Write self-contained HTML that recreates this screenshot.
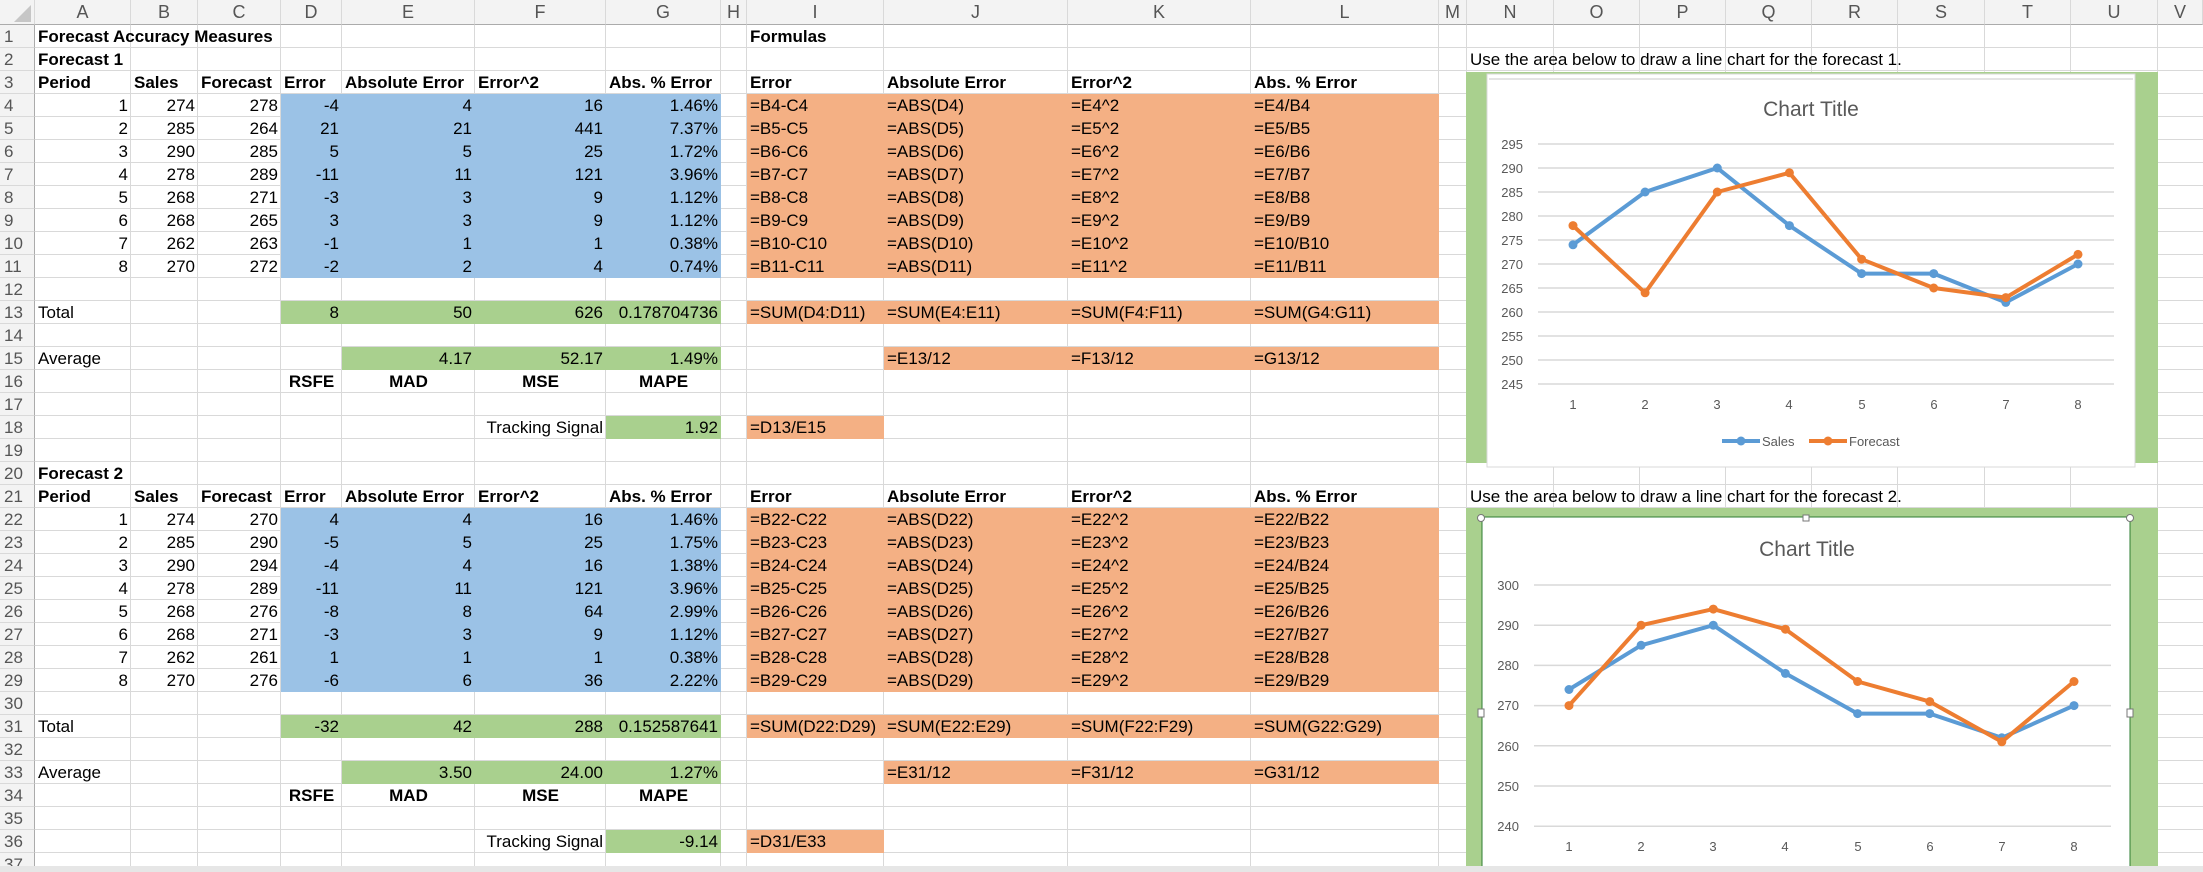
<!DOCTYPE html>
<html><head><meta charset="utf-8"><style>
*{margin:0;padding:0;box-sizing:border-box}
body{width:2203px;height:872px;overflow:hidden;background:#fff;font-family:"Liberation Sans",Arial,sans-serif}
#w{position:relative;width:2203px;height:872px;overflow:hidden}
#lines{position:absolute;left:0;top:25px;width:2203px;height:847px;background:repeating-linear-gradient(to bottom,transparent 0 22px,#d9d9d9 22px 23px)}
.vl{position:absolute;top:0;width:1px;height:872px;background:#d9d9d9}
#g{position:absolute;left:0;top:0;display:grid;grid-template-columns:35px 96px 67px 83px 61px 133px 131px 115px 26px 137px 184px 183px 188px 28px 87px 86px 86px 86px 86px 87px 86px 87px 45px;grid-template-rows:25px repeat(37,23px);font-size:17px;color:#000}
#g div{white-space:nowrap;line-height:23px;padding:0 3px;overflow:visible}
.b{background:#9bc2e6}.o{background:#f4b084}.gr{background:#a9d08e}
.r{text-align:right}.c{text-align:center}.bd{font-weight:bold}
.ch{background:#f3f3f3;color:#555;text-align:center;font-size:18px;line-height:25px!important;border-right:1px solid #d9d9d9;border-bottom:1px solid #ababab;padding:0!important}
.rh{background:#f3f3f3;color:#555;font-size:17px;border-right:1px solid #ababab;border-bottom:1px solid #d9d9d9;padding:0 0 0 4px!important}
</style></head><body><div id="w">
<div id="lines"></div>
<div class="vl" style="left:130px"></div><div class="vl" style="left:197px"></div><div class="vl" style="left:280px"></div><div class="vl" style="left:341px"></div><div class="vl" style="left:474px"></div><div class="vl" style="left:605px"></div><div class="vl" style="left:720px"></div><div class="vl" style="left:746px"></div><div class="vl" style="left:883px"></div><div class="vl" style="left:1067px"></div><div class="vl" style="left:1250px"></div><div class="vl" style="left:1438px"></div><div class="vl" style="left:1466px"></div><div class="vl" style="left:1553px"></div><div class="vl" style="left:1639px"></div><div class="vl" style="left:1725px"></div><div class="vl" style="left:1811px"></div><div class="vl" style="left:1897px"></div><div class="vl" style="left:1984px"></div><div class="vl" style="left:2070px"></div><div class="vl" style="left:2157px"></div>
<div id="g">
<div class="ch" style="grid-area:1/1;position:relative"><svg width="34" height="24" style="position:absolute;left:0;top:0"><polygon points="31,5 31,22 14,22" fill="#c6c6c6"/></svg></div>
<div class="ch" style="grid-area:1/2">A</div><div class="ch" style="grid-area:1/3">B</div><div class="ch" style="grid-area:1/4">C</div><div class="ch" style="grid-area:1/5">D</div><div class="ch" style="grid-area:1/6">E</div><div class="ch" style="grid-area:1/7">F</div><div class="ch" style="grid-area:1/8">G</div><div class="ch" style="grid-area:1/9">H</div><div class="ch" style="grid-area:1/10">I</div><div class="ch" style="grid-area:1/11">J</div><div class="ch" style="grid-area:1/12">K</div><div class="ch" style="grid-area:1/13">L</div><div class="ch" style="grid-area:1/14">M</div><div class="ch" style="grid-area:1/15">N</div><div class="ch" style="grid-area:1/16">O</div><div class="ch" style="grid-area:1/17">P</div><div class="ch" style="grid-area:1/18">Q</div><div class="ch" style="grid-area:1/19">R</div><div class="ch" style="grid-area:1/20">S</div><div class="ch" style="grid-area:1/21">T</div><div class="ch" style="grid-area:1/22">U</div><div class="ch" style="grid-area:1/23">V</div>
<div class="rh" style="grid-area:2/1">1</div><div class="rh" style="grid-area:3/1">2</div><div class="rh" style="grid-area:4/1">3</div><div class="rh" style="grid-area:5/1">4</div><div class="rh" style="grid-area:6/1">5</div><div class="rh" style="grid-area:7/1">6</div><div class="rh" style="grid-area:8/1">7</div><div class="rh" style="grid-area:9/1">8</div><div class="rh" style="grid-area:10/1">9</div><div class="rh" style="grid-area:11/1">10</div><div class="rh" style="grid-area:12/1">11</div><div class="rh" style="grid-area:13/1">12</div><div class="rh" style="grid-area:14/1">13</div><div class="rh" style="grid-area:15/1">14</div><div class="rh" style="grid-area:16/1">15</div><div class="rh" style="grid-area:17/1">16</div><div class="rh" style="grid-area:18/1">17</div><div class="rh" style="grid-area:19/1">18</div><div class="rh" style="grid-area:20/1">19</div><div class="rh" style="grid-area:21/1">20</div><div class="rh" style="grid-area:22/1">21</div><div class="rh" style="grid-area:23/1">22</div><div class="rh" style="grid-area:24/1">23</div><div class="rh" style="grid-area:25/1">24</div><div class="rh" style="grid-area:26/1">25</div><div class="rh" style="grid-area:27/1">26</div><div class="rh" style="grid-area:28/1">27</div><div class="rh" style="grid-area:29/1">28</div><div class="rh" style="grid-area:30/1">29</div><div class="rh" style="grid-area:31/1">30</div><div class="rh" style="grid-area:32/1">31</div><div class="rh" style="grid-area:33/1">32</div><div class="rh" style="grid-area:34/1">33</div><div class="rh" style="grid-area:35/1">34</div><div class="rh" style="grid-area:36/1">35</div><div class="rh" style="grid-area:37/1">36</div><div class="rh" style="grid-area:38/1">37</div>

<div class="b" style="grid-area:5/5/13/9"></div><div class="o" style="grid-area:5/10/13/14"></div>
<div class="gr" style="grid-area:14/5/15/9"></div><div class="o" style="grid-area:14/10/15/14"></div>
<div class="gr" style="grid-area:16/6/17/9"></div><div class="o" style="grid-area:16/11/17/14"></div>
<div class="gr" style="grid-area:19/8/20/9"></div><div class="o" style="grid-area:19/10/20/11"></div>
<div class="b" style="grid-area:23/5/31/9"></div><div class="o" style="grid-area:23/10/31/14"></div>
<div class="gr" style="grid-area:32/5/33/9"></div><div class="o" style="grid-area:32/10/33/14"></div>
<div class="gr" style="grid-area:34/6/35/9"></div><div class="o" style="grid-area:34/11/35/14"></div>
<div class="gr" style="grid-area:37/8/38/9"></div><div class="o" style="grid-area:37/10/38/11"></div>

<div class="bd" style="grid-area:2/2/3/6">Forecast Accuracy Measures</div>
<div class="bd" style="grid-area:2/10">Formulas</div>
<div class="bd" style="grid-area:3/2">Forecast 1</div>
<div style="grid-area:3/15/4/22">Use the area below to draw a line chart for the forecast 1.</div>
<div class="bd" style="grid-area:4/2">Period</div><div class="bd" style="grid-area:4/3">Sales</div><div class="bd" style="grid-area:4/4">Forecast</div><div class="bd" style="grid-area:4/5">Error</div><div class="bd" style="grid-area:4/6">Absolute Error</div><div class="bd" style="grid-area:4/7">Error^2</div><div class="bd" style="grid-area:4/8">Abs. % Error</div>
<div class="bd" style="grid-area:4/10">Error</div><div class="bd" style="grid-area:4/11">Absolute Error</div><div class="bd" style="grid-area:4/12">Error^2</div><div class="bd" style="grid-area:4/13">Abs. % Error</div>

<div class="r" style="grid-area:5/2">1</div><div class="r" style="grid-area:5/3">274</div><div class="r" style="grid-area:5/4">278</div><div class="r" style="grid-area:5/5">-4</div><div class="r" style="grid-area:5/6">4</div><div class="r" style="grid-area:5/7">16</div><div class="r" style="grid-area:5/8">1.46%</div><div style="grid-area:5/10">=B4-C4</div><div style="grid-area:5/11">=ABS(D4)</div><div style="grid-area:5/12">=E4^2</div><div style="grid-area:5/13">=E4/B4</div>
<div class="r" style="grid-area:6/2">2</div><div class="r" style="grid-area:6/3">285</div><div class="r" style="grid-area:6/4">264</div><div class="r" style="grid-area:6/5">21</div><div class="r" style="grid-area:6/6">21</div><div class="r" style="grid-area:6/7">441</div><div class="r" style="grid-area:6/8">7.37%</div><div style="grid-area:6/10">=B5-C5</div><div style="grid-area:6/11">=ABS(D5)</div><div style="grid-area:6/12">=E5^2</div><div style="grid-area:6/13">=E5/B5</div>
<div class="r" style="grid-area:7/2">3</div><div class="r" style="grid-area:7/3">290</div><div class="r" style="grid-area:7/4">285</div><div class="r" style="grid-area:7/5">5</div><div class="r" style="grid-area:7/6">5</div><div class="r" style="grid-area:7/7">25</div><div class="r" style="grid-area:7/8">1.72%</div><div style="grid-area:7/10">=B6-C6</div><div style="grid-area:7/11">=ABS(D6)</div><div style="grid-area:7/12">=E6^2</div><div style="grid-area:7/13">=E6/B6</div>
<div class="r" style="grid-area:8/2">4</div><div class="r" style="grid-area:8/3">278</div><div class="r" style="grid-area:8/4">289</div><div class="r" style="grid-area:8/5">-11</div><div class="r" style="grid-area:8/6">11</div><div class="r" style="grid-area:8/7">121</div><div class="r" style="grid-area:8/8">3.96%</div><div style="grid-area:8/10">=B7-C7</div><div style="grid-area:8/11">=ABS(D7)</div><div style="grid-area:8/12">=E7^2</div><div style="grid-area:8/13">=E7/B7</div>
<div class="r" style="grid-area:9/2">5</div><div class="r" style="grid-area:9/3">268</div><div class="r" style="grid-area:9/4">271</div><div class="r" style="grid-area:9/5">-3</div><div class="r" style="grid-area:9/6">3</div><div class="r" style="grid-area:9/7">9</div><div class="r" style="grid-area:9/8">1.12%</div><div style="grid-area:9/10">=B8-C8</div><div style="grid-area:9/11">=ABS(D8)</div><div style="grid-area:9/12">=E8^2</div><div style="grid-area:9/13">=E8/B8</div>
<div class="r" style="grid-area:10/2">6</div><div class="r" style="grid-area:10/3">268</div><div class="r" style="grid-area:10/4">265</div><div class="r" style="grid-area:10/5">3</div><div class="r" style="grid-area:10/6">3</div><div class="r" style="grid-area:10/7">9</div><div class="r" style="grid-area:10/8">1.12%</div><div style="grid-area:10/10">=B9-C9</div><div style="grid-area:10/11">=ABS(D9)</div><div style="grid-area:10/12">=E9^2</div><div style="grid-area:10/13">=E9/B9</div>
<div class="r" style="grid-area:11/2">7</div><div class="r" style="grid-area:11/3">262</div><div class="r" style="grid-area:11/4">263</div><div class="r" style="grid-area:11/5">-1</div><div class="r" style="grid-area:11/6">1</div><div class="r" style="grid-area:11/7">1</div><div class="r" style="grid-area:11/8">0.38%</div><div style="grid-area:11/10">=B10-C10</div><div style="grid-area:11/11">=ABS(D10)</div><div style="grid-area:11/12">=E10^2</div><div style="grid-area:11/13">=E10/B10</div>
<div class="r" style="grid-area:12/2">8</div><div class="r" style="grid-area:12/3">270</div><div class="r" style="grid-area:12/4">272</div><div class="r" style="grid-area:12/5">-2</div><div class="r" style="grid-area:12/6">2</div><div class="r" style="grid-area:12/7">4</div><div class="r" style="grid-area:12/8">0.74%</div><div style="grid-area:12/10">=B11-C11</div><div style="grid-area:12/11">=ABS(D11)</div><div style="grid-area:12/12">=E11^2</div><div style="grid-area:12/13">=E11/B11</div>

<div style="grid-area:14/2">Total</div><div class="r" style="grid-area:14/5">8</div><div class="r" style="grid-area:14/6">50</div><div class="r" style="grid-area:14/7">626</div><div class="r" style="grid-area:14/8">0.178704736</div><div style="grid-area:14/10">=SUM(D4:D11)</div><div style="grid-area:14/11">=SUM(E4:E11)</div><div style="grid-area:14/12">=SUM(F4:F11)</div><div style="grid-area:14/13">=SUM(G4:G11)</div>
<div style="grid-area:16/2">Average</div><div class="r" style="grid-area:16/6">4.17</div><div class="r" style="grid-area:16/7">52.17</div><div class="r" style="grid-area:16/8">1.49%</div><div style="grid-area:16/11">=E13/12</div><div style="grid-area:16/12">=F13/12</div><div style="grid-area:16/13">=G13/12</div>
<div class="bd c" style="grid-area:17/5">RSFE</div><div class="bd c" style="grid-area:17/6">MAD</div><div class="bd c" style="grid-area:17/7">MSE</div><div class="bd c" style="grid-area:17/8">MAPE</div>
<div class="r" style="grid-area:19/7">Tracking Signal</div><div class="r" style="grid-area:19/8">1.92</div><div style="grid-area:19/10">=D13/E15</div>

<div class="bd" style="grid-area:21/2">Forecast 2</div>
<div style="grid-area:22/15/23/22">Use the area below to draw a line chart for the forecast 2.</div>
<div class="bd" style="grid-area:22/2">Period</div><div class="bd" style="grid-area:22/3">Sales</div><div class="bd" style="grid-area:22/4">Forecast</div><div class="bd" style="grid-area:22/5">Error</div><div class="bd" style="grid-area:22/6">Absolute Error</div><div class="bd" style="grid-area:22/7">Error^2</div><div class="bd" style="grid-area:22/8">Abs. % Error</div>
<div class="bd" style="grid-area:22/10">Error</div><div class="bd" style="grid-area:22/11">Absolute Error</div><div class="bd" style="grid-area:22/12">Error^2</div><div class="bd" style="grid-area:22/13">Abs. % Error</div>

<div class="r" style="grid-area:23/2">1</div><div class="r" style="grid-area:23/3">274</div><div class="r" style="grid-area:23/4">270</div><div class="r" style="grid-area:23/5">4</div><div class="r" style="grid-area:23/6">4</div><div class="r" style="grid-area:23/7">16</div><div class="r" style="grid-area:23/8">1.46%</div><div style="grid-area:23/10">=B22-C22</div><div style="grid-area:23/11">=ABS(D22)</div><div style="grid-area:23/12">=E22^2</div><div style="grid-area:23/13">=E22/B22</div>
<div class="r" style="grid-area:24/2">2</div><div class="r" style="grid-area:24/3">285</div><div class="r" style="grid-area:24/4">290</div><div class="r" style="grid-area:24/5">-5</div><div class="r" style="grid-area:24/6">5</div><div class="r" style="grid-area:24/7">25</div><div class="r" style="grid-area:24/8">1.75%</div><div style="grid-area:24/10">=B23-C23</div><div style="grid-area:24/11">=ABS(D23)</div><div style="grid-area:24/12">=E23^2</div><div style="grid-area:24/13">=E23/B23</div>
<div class="r" style="grid-area:25/2">3</div><div class="r" style="grid-area:25/3">290</div><div class="r" style="grid-area:25/4">294</div><div class="r" style="grid-area:25/5">-4</div><div class="r" style="grid-area:25/6">4</div><div class="r" style="grid-area:25/7">16</div><div class="r" style="grid-area:25/8">1.38%</div><div style="grid-area:25/10">=B24-C24</div><div style="grid-area:25/11">=ABS(D24)</div><div style="grid-area:25/12">=E24^2</div><div style="grid-area:25/13">=E24/B24</div>
<div class="r" style="grid-area:26/2">4</div><div class="r" style="grid-area:26/3">278</div><div class="r" style="grid-area:26/4">289</div><div class="r" style="grid-area:26/5">-11</div><div class="r" style="grid-area:26/6">11</div><div class="r" style="grid-area:26/7">121</div><div class="r" style="grid-area:26/8">3.96%</div><div style="grid-area:26/10">=B25-C25</div><div style="grid-area:26/11">=ABS(D25)</div><div style="grid-area:26/12">=E25^2</div><div style="grid-area:26/13">=E25/B25</div>
<div class="r" style="grid-area:27/2">5</div><div class="r" style="grid-area:27/3">268</div><div class="r" style="grid-area:27/4">276</div><div class="r" style="grid-area:27/5">-8</div><div class="r" style="grid-area:27/6">8</div><div class="r" style="grid-area:27/7">64</div><div class="r" style="grid-area:27/8">2.99%</div><div style="grid-area:27/10">=B26-C26</div><div style="grid-area:27/11">=ABS(D26)</div><div style="grid-area:27/12">=E26^2</div><div style="grid-area:27/13">=E26/B26</div>
<div class="r" style="grid-area:28/2">6</div><div class="r" style="grid-area:28/3">268</div><div class="r" style="grid-area:28/4">271</div><div class="r" style="grid-area:28/5">-3</div><div class="r" style="grid-area:28/6">3</div><div class="r" style="grid-area:28/7">9</div><div class="r" style="grid-area:28/8">1.12%</div><div style="grid-area:28/10">=B27-C27</div><div style="grid-area:28/11">=ABS(D27)</div><div style="grid-area:28/12">=E27^2</div><div style="grid-area:28/13">=E27/B27</div>
<div class="r" style="grid-area:29/2">7</div><div class="r" style="grid-area:29/3">262</div><div class="r" style="grid-area:29/4">261</div><div class="r" style="grid-area:29/5">1</div><div class="r" style="grid-area:29/6">1</div><div class="r" style="grid-area:29/7">1</div><div class="r" style="grid-area:29/8">0.38%</div><div style="grid-area:29/10">=B28-C28</div><div style="grid-area:29/11">=ABS(D28)</div><div style="grid-area:29/12">=E28^2</div><div style="grid-area:29/13">=E28/B28</div>
<div class="r" style="grid-area:30/2">8</div><div class="r" style="grid-area:30/3">270</div><div class="r" style="grid-area:30/4">276</div><div class="r" style="grid-area:30/5">-6</div><div class="r" style="grid-area:30/6">6</div><div class="r" style="grid-area:30/7">36</div><div class="r" style="grid-area:30/8">2.22%</div><div style="grid-area:30/10">=B29-C29</div><div style="grid-area:30/11">=ABS(D29)</div><div style="grid-area:30/12">=E29^2</div><div style="grid-area:30/13">=E29/B29</div>

<div style="grid-area:32/2">Total</div><div class="r" style="grid-area:32/5">-32</div><div class="r" style="grid-area:32/6">42</div><div class="r" style="grid-area:32/7">288</div><div class="r" style="grid-area:32/8">0.152587641</div><div style="grid-area:32/10">=SUM(D22:D29)</div><div style="grid-area:32/11">=SUM(E22:E29)</div><div style="grid-area:32/12">=SUM(F22:F29)</div><div style="grid-area:32/13">=SUM(G22:G29)</div>
<div style="grid-area:34/2">Average</div><div class="r" style="grid-area:34/6">3.50</div><div class="r" style="grid-area:34/7">24.00</div><div class="r" style="grid-area:34/8">1.27%</div><div style="grid-area:34/11">=E31/12</div><div style="grid-area:34/12">=F31/12</div><div style="grid-area:34/13">=G31/12</div>
<div class="bd c" style="grid-area:35/5">RSFE</div><div class="bd c" style="grid-area:35/6">MAD</div><div class="bd c" style="grid-area:35/7">MSE</div><div class="bd c" style="grid-area:35/8">MAPE</div>
<div class="r" style="grid-area:37/7">Tracking Signal</div><div class="r" style="grid-area:37/8">-9.14</div><div style="grid-area:37/10">=D31/E33</div>
</div>

<svg width="2203" height="872" style="position:absolute;left:0;top:0" font-family="Liberation Sans, sans-serif">
<rect x="1466" y="72" width="692" height="391" fill="#a9d08e"/>
<rect x="1487" y="74" width="648" height="393" fill="#fff" stroke="#d9d9d9" stroke-width="1"/>
<line x1="1489" y1="79" x2="2133" y2="79" stroke="#e4e4e4" stroke-width="2"/>
<text x="1811" y="116" text-anchor="middle" font-size="21" fill="#595959">Chart Title</text>
<g stroke="#d9d9d9" stroke-width="1.5">
<line x1="1538" y1="144" x2="2114" y2="144"/><line x1="1538" y1="168" x2="2114" y2="168"/><line x1="1538" y1="192" x2="2114" y2="192"/><line x1="1538" y1="216" x2="2114" y2="216"/><line x1="1538" y1="240" x2="2114" y2="240"/><line x1="1538" y1="264" x2="2114" y2="264"/><line x1="1538" y1="288" x2="2114" y2="288"/><line x1="1538" y1="312" x2="2114" y2="312"/><line x1="1538" y1="336" x2="2114" y2="336"/><line x1="1538" y1="360" x2="2114" y2="360"/><line x1="1538" y1="384" x2="2114" y2="384"/></g>
<g font-size="13" fill="#595959" text-anchor="end">
<text x="1523" y="149">295</text><text x="1523" y="173">290</text><text x="1523" y="197">285</text><text x="1523" y="221">280</text><text x="1523" y="245">275</text><text x="1523" y="269">270</text><text x="1523" y="293">265</text><text x="1523" y="317">260</text><text x="1523" y="341">255</text><text x="1523" y="365">250</text><text x="1523" y="389">245</text></g>
<g font-size="13" fill="#595959" text-anchor="middle">
<text x="1573" y="409">1</text><text x="1645" y="409">2</text><text x="1717" y="409">3</text><text x="1789" y="409">4</text><text x="1862" y="409">5</text><text x="1934" y="409">6</text><text x="2006" y="409">7</text><text x="2078" y="409">8</text></g>
<polyline fill="none" stroke="#5b9bd5" stroke-width="4" stroke-linejoin="round" points="1573,244.8 1645.1,192 1717.3,168 1789.4,225.6 1861.6,273.6 1933.7,273.6 2005.8,302.4 2078,264"/>
<g fill="#5b9bd5"><circle cx="1573" cy="244.8" r="4.5"/><circle cx="1645.1" cy="192" r="4.5"/><circle cx="1717.3" cy="168" r="4.5"/><circle cx="1789.4" cy="225.6" r="4.5"/><circle cx="1861.6" cy="273.6" r="4.5"/><circle cx="1933.7" cy="273.6" r="4.5"/><circle cx="2005.8" cy="302.4" r="4.5"/><circle cx="2078" cy="264" r="4.5"/></g>
<polyline fill="none" stroke="#ed7d31" stroke-width="4" stroke-linejoin="round" points="1573,225.6 1645.1,292.8 1717.3,192 1789.4,172.8 1861.6,259.2 1933.7,288 2005.8,297.6 2078,254.4"/>
<g fill="#ed7d31"><circle cx="1573" cy="225.6" r="4.5"/><circle cx="1645.1" cy="292.8" r="4.5"/><circle cx="1717.3" cy="192" r="4.5"/><circle cx="1789.4" cy="172.8" r="4.5"/><circle cx="1861.6" cy="259.2" r="4.5"/><circle cx="1933.7" cy="288" r="4.5"/><circle cx="2005.8" cy="297.6" r="4.5"/><circle cx="2078" cy="254.4" r="4.5"/></g>
<line x1="1722" y1="441" x2="1760" y2="441" stroke="#5b9bd5" stroke-width="4"/><circle cx="1741" cy="441" r="4.5" fill="#5b9bd5"/>
<text x="1762" y="446" font-size="13" fill="#595959">Sales</text>
<line x1="1809" y1="441" x2="1847" y2="441" stroke="#ed7d31" stroke-width="4"/><circle cx="1828" cy="441" r="4.5" fill="#ed7d31"/>
<text x="1849" y="446" font-size="13" fill="#595959">Forecast</text>

<rect x="1466" y="508" width="692" height="364" fill="#a9d08e"/>
<rect x="1482" y="517" width="648" height="360" fill="#fff" stroke="#2e7d32" stroke-width="1"/>
<text x="1807" y="556" text-anchor="middle" font-size="21" fill="#595959">Chart Title</text>
<g stroke="#d9d9d9" stroke-width="1.5">
<line x1="1534" y1="585" x2="2111" y2="585"/><line x1="1534" y1="625.2" x2="2111" y2="625.2"/><line x1="1534" y1="665.4" x2="2111" y2="665.4"/><line x1="1534" y1="705.6" x2="2111" y2="705.6"/><line x1="1534" y1="745.8" x2="2111" y2="745.8"/><line x1="1534" y1="786" x2="2111" y2="786"/><line x1="1534" y1="826.2" x2="2111" y2="826.2"/></g>
<g font-size="13" fill="#595959" text-anchor="end">
<text x="1519" y="590">300</text><text x="1519" y="630">290</text><text x="1519" y="670">280</text><text x="1519" y="710">270</text><text x="1519" y="751">260</text><text x="1519" y="791">250</text><text x="1519" y="831">240</text></g>
<g font-size="13" fill="#595959" text-anchor="middle">
<text x="1569" y="851">1</text><text x="1641" y="851">2</text><text x="1713" y="851">3</text><text x="1785" y="851">4</text><text x="1858" y="851">5</text><text x="1930" y="851">6</text><text x="2002" y="851">7</text><text x="2074" y="851">8</text></g>
<polyline fill="none" stroke="#5b9bd5" stroke-width="4" stroke-linejoin="round" points="1569,689.5 1641.1,645.3 1713.3,625.2 1785.4,673.4 1857.6,713.6 1929.7,713.6 2001.8,737.8 2074,705.6"/>
<g fill="#5b9bd5"><circle cx="1569" cy="689.5" r="4.5"/><circle cx="1641.1" cy="645.3" r="4.5"/><circle cx="1713.3" cy="625.2" r="4.5"/><circle cx="1785.4" cy="673.4" r="4.5"/><circle cx="1857.6" cy="713.6" r="4.5"/><circle cx="1929.7" cy="713.6" r="4.5"/><circle cx="2001.8" cy="737.8" r="4.5"/><circle cx="2074" cy="705.6" r="4.5"/></g>
<polyline fill="none" stroke="#ed7d31" stroke-width="4" stroke-linejoin="round" points="1569,705.6 1641.1,625.2 1713.3,609.1 1785.4,629.2 1857.6,681.5 1929.7,701.6 2001.8,741.8 2074,681.5"/>
<g fill="#ed7d31"><circle cx="1569" cy="705.6" r="4.5"/><circle cx="1641.1" cy="625.2" r="4.5"/><circle cx="1713.3" cy="609.1" r="4.5"/><circle cx="1785.4" cy="629.2" r="4.5"/><circle cx="1857.6" cy="681.5" r="4.5"/><circle cx="1929.7" cy="701.6" r="4.5"/><circle cx="2001.8" cy="741.8" r="4.5"/><circle cx="2074" cy="681.5" r="4.5"/></g>
<g fill="#fff" stroke="#777" stroke-width="1">
<circle cx="1481" cy="518" r="3.5"/><circle cx="2130" cy="518" r="3.5"/><rect x="1803" y="515" width="6" height="6"/><rect x="1478" y="709" width="6" height="8"/><rect x="2127" y="709" width="6" height="8"/></g>
<rect x="0" y="866" width="2203" height="6" fill="#e6e6e6"/>
</svg>
</div></body></html>
